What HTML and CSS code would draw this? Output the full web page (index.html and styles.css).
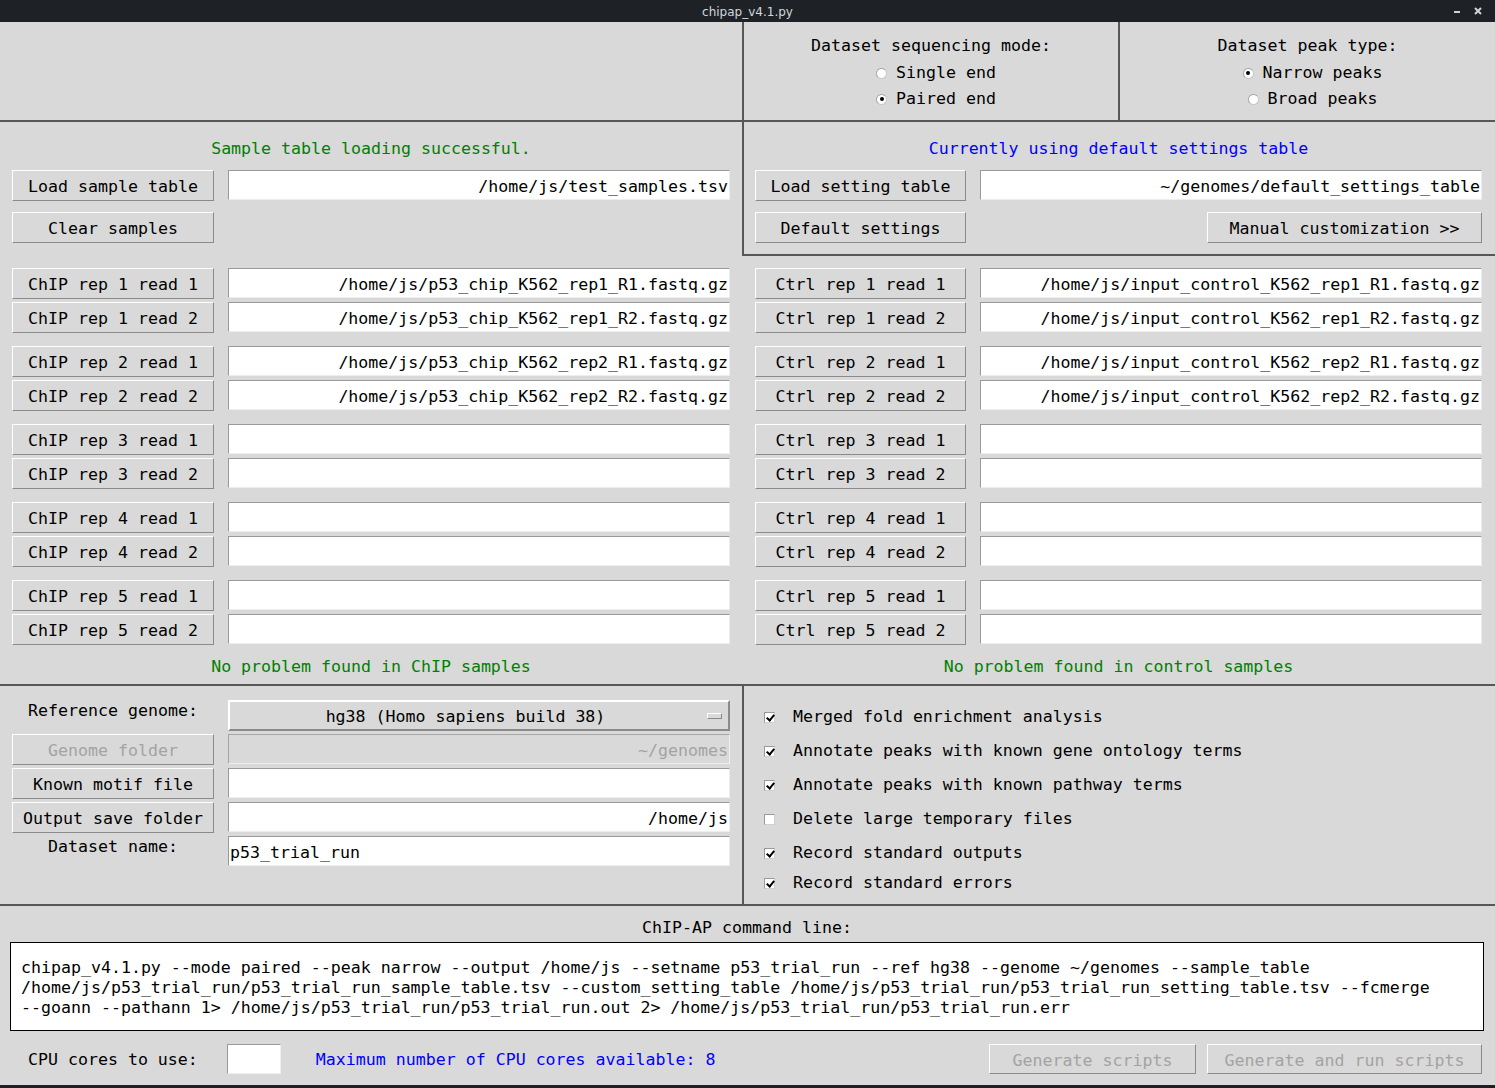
FILE: index.html
```html
<!DOCTYPE html>
<html>
<head>
<meta charset="utf-8">
<title>chipap_v4.1.py</title>
<link rel="stylesheet" href="styles.css">
</head>
<body>
<div class="window">
  <header class="titlebar">
    <div></div>
    <div class="title">chipap_v4.1.py</div>
    <div class="wctl">
      <svg width="8" height="8" viewBox="0 0 8 8"><rect x="1" y="4" width="6" height="2" fill="#cfd3d6"/></svg>
      <svg width="8" height="8" viewBox="0 0 8 8"><path d="M1 1 L7 7 M7 1 L1 7" stroke="#cfd3d6" stroke-width="2"/></svg>
    </div>
  </header>

  <main class="app">
    <section class="top">
      <div class="top-blank"></div>
      <div class="radio-box">
        <div class="rb-title">Dataset sequencing mode:</div>
        <div class="radio"><span class="rdot"></span>Single end</div>
        <div class="radio"><span class="rdot on"></span>Paired end</div>
      </div>
      <div class="radio-box">
        <div class="rb-title">Dataset peak type:</div>
        <div class="radio"><span class="rdot on"></span>Narrow peaks</div>
        <div class="radio"><span class="rdot"></span>Broad peaks</div>
      </div>
    </section>

    <section class="samples">
      <div class="col-left">
        <div class="status green first">Sample table loading successful.</div>
        <div class="row"><div class="btn wl">Load sample table</div><div class="entry r">/home/js/test_samples.tsv</div></div>
        <div class="row second"><div class="btn wl">Clear samples</div></div>
        <div class="groups">
          <div class="group">
            <div class="row"><div class="btn wl">ChIP rep 1 read 1</div><div class="entry r">/home/js/p53_chip_K562_rep1_R1.fastq.gz</div></div>
            <div class="row"><div class="btn wl">ChIP rep 1 read 2</div><div class="entry r">/home/js/p53_chip_K562_rep1_R2.fastq.gz</div></div>
          </div>
          <div class="group">
            <div class="row"><div class="btn wl">ChIP rep 2 read 1</div><div class="entry r">/home/js/p53_chip_K562_rep2_R1.fastq.gz</div></div>
            <div class="row"><div class="btn wl">ChIP rep 2 read 2</div><div class="entry r">/home/js/p53_chip_K562_rep2_R2.fastq.gz</div></div>
          </div>
          <div class="group">
            <div class="row"><div class="btn wl">ChIP rep 3 read 1</div><div class="entry"></div></div>
            <div class="row"><div class="btn wl">ChIP rep 3 read 2</div><div class="entry"></div></div>
          </div>
          <div class="group">
            <div class="row"><div class="btn wl">ChIP rep 4 read 1</div><div class="entry"></div></div>
            <div class="row"><div class="btn wl">ChIP rep 4 read 2</div><div class="entry"></div></div>
          </div>
          <div class="group">
            <div class="row"><div class="btn wl">ChIP rep 5 read 1</div><div class="entry"></div></div>
            <div class="row"><div class="btn wl">ChIP rep 5 read 2</div><div class="entry"></div></div>
          </div>
        </div>
        <div class="status green last">No problem found in ChIP samples</div>
      </div>

      <div class="col-right">
        <div class="settings-box">
          <div class="status blue first">Currently using default settings table</div>
          <div class="row"><div class="btn wr">Load setting table</div><div class="entry r">~/genomes/default_settings_table</div></div>
          <div class="row second split"><div class="btn wr">Default settings</div><div class="btn wm">Manual customization &gt;&gt;</div></div>
        </div>
        <div class="groups right">
          <div class="group">
            <div class="row"><div class="btn wr">Ctrl rep 1 read 1</div><div class="entry r">/home/js/input_control_K562_rep1_R1.fastq.gz</div></div>
            <div class="row"><div class="btn wr">Ctrl rep 1 read 2</div><div class="entry r">/home/js/input_control_K562_rep1_R2.fastq.gz</div></div>
          </div>
          <div class="group">
            <div class="row"><div class="btn wr">Ctrl rep 2 read 1</div><div class="entry r">/home/js/input_control_K562_rep2_R1.fastq.gz</div></div>
            <div class="row"><div class="btn wr">Ctrl rep 2 read 2</div><div class="entry r">/home/js/input_control_K562_rep2_R2.fastq.gz</div></div>
          </div>
          <div class="group">
            <div class="row"><div class="btn wr">Ctrl rep 3 read 1</div><div class="entry"></div></div>
            <div class="row"><div class="btn wr">Ctrl rep 3 read 2</div><div class="entry"></div></div>
          </div>
          <div class="group">
            <div class="row"><div class="btn wr">Ctrl rep 4 read 1</div><div class="entry"></div></div>
            <div class="row"><div class="btn wr">Ctrl rep 4 read 2</div><div class="entry"></div></div>
          </div>
          <div class="group">
            <div class="row"><div class="btn wr">Ctrl rep 5 read 1</div><div class="entry"></div></div>
            <div class="row"><div class="btn wr">Ctrl rep 5 read 2</div><div class="entry"></div></div>
          </div>
        </div>
        <div class="status green last">No problem found in control samples</div>
      </div>
    </section>

    <section class="lower">
      <div class="lower-left">
        <div class="row"><div class="label wl">Reference genome:</div>
          <div class="dropdown"><span class="dd-text">hg38 (Homo sapiens build 38)</span><span class="dd-ind"></span></div>
        </div>
        <div class="row"><div class="btn wl disabled">Genome folder</div><div class="entry r disabled">~/genomes</div></div>
        <div class="row"><div class="btn wl">Known motif file</div><div class="entry"></div></div>
        <div class="row"><div class="btn wl">Output save folder</div><div class="entry r">/home/js</div></div>
        <div class="row"><div class="label wl">Dataset name:</div><div class="entry l">p53_trial_run</div></div>
      </div>
      <div class="lower-right">
        <div class="check"><span class="cbox on"></span>Merged fold enrichment analysis</div>
        <div class="check"><span class="cbox on"></span>Annotate peaks with known gene ontology terms</div>
        <div class="check"><span class="cbox on"></span>Annotate peaks with known pathway terms</div>
        <div class="check"><span class="cbox"></span>Delete large temporary files</div>
        <div class="check"><span class="cbox on"></span>Record standard outputs</div>
        <div class="check tight"><span class="cbox on"></span>Record standard errors</div>
      </div>
    </section>

    <section class="command">
      <div class="cmd-title">ChIP-AP command line:</div>
      <div class="cmd-box">chipap_v4.1.py --mode paired --peak narrow --output /home/js --setname p53_trial_run --ref hg38 --genome ~/genomes --sample_table<br>/home/js/p53_trial_run/p53_trial_run_sample_table.tsv --custom_setting_table /home/js/p53_trial_run/p53_trial_run_setting_table.tsv --fcmerge<br>--goann --pathann 1&gt; /home/js/p53_trial_run/p53_trial_run.out 2&gt; /home/js/p53_trial_run/p53_trial_run.err</div>
      <div class="cpu-row">
        <div class="cpu-label">CPU cores to use:</div>
        <div class="entry cpu-entry"></div>
        <div class="blue cpu-max">Maximum number of CPU cores available: 8</div>
        <div class="spacer"></div>
        <div class="btn disabled wg1">Generate scripts</div>
        <div class="btn disabled wg2">Generate and run scripts</div>
      </div>
    </section>
  </main>
</div>
</body>
</html>
```

FILE: styles.css
```css
* { box-sizing: border-box; }
html, body { margin: 0; padding: 0; }
body {
  background: #1d2025;
  width: 1495px;
  height: 1088px;
  overflow: hidden;
  font-family: "DejaVu Sans Mono", "Liberation Mono", monospace;
  font-size: 16.6px;
  color: #000;
}
.window { width: 1495px; }

/* title bar */
.titlebar {
  height: 22px;
  background: #1e2227;
  display: grid;
  grid-template-columns: 1fr auto 1fr;
  align-items: center;
  color: #d3d7da;
  font-family: "DejaVu Sans", sans-serif;
  font-size: 12px;
}
.title { padding-top: 1px; }
.wctl {
  display: flex;
  justify-content: flex-end;
  align-items: center;
  gap: 13px;
  padding-right: 13px;
}
.wctl svg { display: block; }

.app {
  background: #d9d9d9;
  height: 1063px;
}

/* top radio section */
.top {
  display: grid;
  grid-template-columns: 742px 376px 1fr;
  height: 100px;
  border-bottom: 2px solid #575757;
}
.radio-box {
  border-left: 2px solid #575757;
  display: flex;
  flex-direction: column;
  align-items: center;
  padding-top: 11px;
}
.rb-title { line-height: 26px; height: 27px; }
.radio {
  display: flex;
  align-items: center;
  line-height: 26px;
  height: 26px;
  padding-left: 10px;
}
.rdot {
  width: 11px;
  height: 11px;
  border-radius: 50%;
  background: #fff;
  border: 1px solid #c8c8c8;
  border-top-color: #a0a0a0;
  border-left-color: #a8a8a8;
  margin-right: 9px;
  display: flex;
  align-items: center;
  justify-content: center;
}
.rdot.on::after {
  content: "";
  width: 4px;
  height: 4px;
  border-radius: 50%;
  background: #000;
}

/* common widgets */
.row {
  display: flex;
  gap: 14px;
  height: 31px;
}
.btn {
  height: 31px;
  background: #d9d9d9;
  border: 1px solid;
  border-color: #ffffff #8a8a8a #8a8a8a #ffffff;
  display: flex;
  align-items: center;
  justify-content: center;
  white-space: nowrap;
  padding-top: 2px;
}
.btn.disabled { color: #a3a3a3; }
.entry {
  width: 502px;
  height: 30px;
  background: #fff;
  border: 1px solid;
  border-color: #999999 #eeeeee #eeeeee #999999;
  display: flex;
  align-items: center;
  padding: 2px 1px 0 1px;
  white-space: nowrap;
  overflow: hidden;
}
.entry.r { justify-content: flex-end; }
.entry.l { justify-content: flex-start; }
.entry.disabled { background: #d9d9d9; color: #a3a3a3; border-color: #a6a6a6 #eeeeee #eeeeee #a6a6a6; }
.wl { width: 202px; }
.wr { width: 211px; }
.wm { width: 275px; }

.status {
  line-height: 24px;
  height: 22px;
  text-align: center;
}
.green { color: #008000; }
.blue { color: #0000ff; }

/* samples */
.samples {
  display: grid;
  grid-template-columns: 742px 753px;
  height: 564px;
  border-bottom: 2px solid #575757;
}
.col-left {
  padding: 15px 12px 0 12px;
  display: flex;
  flex-direction: column;
}
.col-right {
  display: flex;
  flex-direction: column;
}
.status.first { margin-bottom: 11px; }
.row.second { margin-top: 11px; }
.row.split { justify-content: space-between; }
.groups {
  display: flex;
  flex-direction: column;
  gap: 13px;
  margin-top: 25px;
}
.group {
  display: flex;
  flex-direction: column;
  gap: 3px;
}
.status.last { margin-top: 10px; }
.settings-box {
  border-left: 2px solid #575757;
  border-bottom: 2px solid #575757;
  padding: 15px 13px 11px 11px;
}
.groups.right {
  margin-top: 12px;
  padding: 0 13px;
}

/* lower */
.lower {
  display: grid;
  grid-template-columns: 742px 753px;
  height: 220px;
  border-bottom: 2px solid #575757;
}
.lower-left {
  padding: 14px 12px 0 12px;
  display: flex;
  flex-direction: column;
  gap: 3px;
}
.label {
  text-align: center;
  line-height: 22px;
  align-self: flex-start;
}
.dropdown {
  width: 502px;
  height: 31px;
  border: 2px solid;
  border-color: #ffffff #8a8a8a #8a8a8a #ffffff;
  display: flex;
  align-items: center;
  padding: 2px 6px 0 0;
}
.dd-text {
  flex: 1;
  text-align: center;
  padding-right: 6px;
}
.dd-ind {
  width: 15px;
  height: 6px;
  margin-top: -2px;
  border: 1px solid;
  border-color: #ffffff #8a8a8a #8a8a8a #ffffff;
  background: #d9d9d9;
}
.lower-right {
  border-left: 2px solid #575757;
  padding: 14px 0 0 20px;
  display: flex;
  flex-direction: column;
}
.check {
  display: flex;
  align-items: center;
  height: 34px;
  line-height: 34px;
}
.check.tight { margin-top: -4px; }
.cbox {
  width: 11px;
  height: 11px;
  background: #fff;
  border: 1px solid;
  border-color: #9a9a9a #d0d0d0 #d0d0d0 #9a9a9a;
  margin-right: 18px;
  position: relative;
}
.cbox.on::after {
  content: "";
  position: absolute;
  left: 3px;
  top: 0px;
  width: 3px;
  height: 6px;
  border: solid #000;
  border-width: 0 2px 2px 0;
  transform: rotate(40deg);
}

/* command */
.command {
  height: 179px;
  padding: 10px 11px 0 10px;
}
.cmd-title {
  text-align: center;
  line-height: 24px;
  height: 22px;
  margin-bottom: 4px;
}
.cmd-box {
  height: 89px;
  background: #fff;
  border: 1px solid #000;
  padding: 15px 10px 0 10px;
  line-height: 20px;
  white-space: nowrap;
  overflow: hidden;
}
.cpu-row {
  margin-top: 13px;
  display: flex;
  align-items: center;
  height: 30px;
}
.cpu-label { margin-left: 18px; padding-top: 1px; }
.cpu-entry { width: 54px; margin-left: 29px; height: 30px; }
.cpu-max { margin-left: 35px; padding-top: 1px; }
.spacer { flex: 1; }
.wg1 { width: 207px; height: 30px; }
.wg2 { width: 275px; height: 30px; margin-left: 11px; margin-right: 2px; }
```
